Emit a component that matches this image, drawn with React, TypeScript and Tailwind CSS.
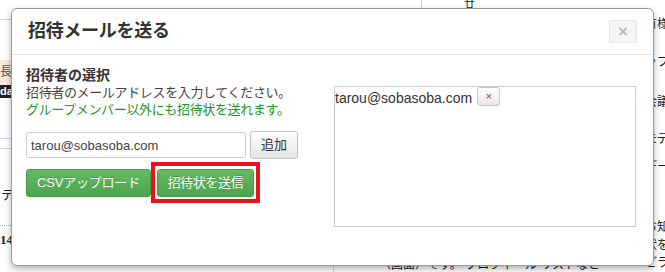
import React from 'react';

const FONT = '"Liberation Sans", "Noto Sans CJK JP", sans-serif';

// Page behind the dialog: only thin strips on the left and right are visible
const BackgroundPage: React.FC = () => (
  <div className="flex h-[272px] w-[665px] bg-white text-[#222]" style={{ fontFamily: FONT }}>
    <div className="w-[11px] shrink-0 overflow-hidden">
      <div className="mt-[19px] h-px bg-[#cfcff2]" />
      <div className="mt-[40px] h-[25px] bg-[#fbe9dc] text-[12px] leading-[25px] text-[#555]">長</div>
      <div className="h-[13px] bg-[#222] text-[11px] font-bold leading-[13px] text-white">da</div>
      <div className="mt-[40px] h-px bg-[#cfcff2]" />
      <div className="mt-[9px] h-px bg-[#cfcff2]" />
      <div className="mt-[38px] pl-[1px] text-[13px] leading-[16px]">テ</div>
      <div className="mt-[22px] border-t border-dotted border-[#aaa]" />
      <div className="mt-[6px] text-[13px] font-bold leading-[16px]" style={{ fontFamily: '"Liberation Serif", serif' }}>14</div>
    </div>
    <div className="relative flex-1">
      <div className="ml-[410px] flex h-[9px]">
        <div className="w-px bg-[#cfcff2]" />
        <div className="ml-[42px] text-[11px] leading-[8px]">廿</div>
      </div>
      <div className="mt-[249px] flex h-[14px]">
        <div className="ml-[322px] w-px bg-[#cfcff2]" />
        <div className="ml-[45px] whitespace-nowrap text-[12px] leading-[14px]">（画面）です。 プロフィール リストなど</div>
      </div>
    </div>
    <div className="w-[20px] shrink-0 overflow-hidden whitespace-nowrap text-[12px] leading-[14px]">
      <div className="mt-[17px]">有様</div>
      <div className="mt-[24px]">ップ</div>
      <div className="mt-[26px]">会議</div>
      <div className="mt-[23px]">モデ</div>
      <div className="mt-[14px]">デー</div>
      <div className="mt-[46px]">お知</div>
      <div className="mt-[4px]">状を</div>
      <div className="mt-[4px]">どラ</div>
    </div>
  </div>
);

const InviteModal: React.FC = () => (
  <div
    className="absolute left-[11px] top-[8px] h-[258px] w-[643px] rounded-[6px] border border-[#9a9a9a] bg-white shadow-[0_3px_7px_rgba(0,0,0,0.3)]"
    style={{ fontFamily: FONT }}
  >
    {/* Header */}
    <div className="flex h-[46px] items-center justify-between border-b border-[#e5e5e5] pl-[16px] pr-[16px]">
      <h3 className="text-[18px] font-bold tracking-[-0.3px] text-[#333]">招待メールを送る</h3>
      <button className="flex h-[23px] w-[28px] items-center justify-center rounded-[2px] border border-[#e6e6e6] bg-[#f5f5f5] text-[17px] font-bold leading-none text-[#bbb]">
        ×
      </button>
    </div>

    {/* Body */}
    <div className="flex pl-[14px] pt-[11px]">
      <div className="w-[272px]">
        <div className="text-[14px] font-bold leading-[18px] text-[#333]">招待者の選択</div>
        <div className="text-[13px] leading-[17px] tracking-[-0.35px] text-[#444]">招待者のメールアドレスを入力してください。</div>
        <div className="text-[13px] leading-[17px] tracking-[-0.35px] text-[#1f961f]">グループメンバー以外にも招待状を送れます。</div>

        <div className="mt-[13px] flex items-center">
          <input
            className="h-[26px] w-[220px] rounded-[3px] border border-[#ccc] px-[4px] text-[13px] text-[#444] outline-none"
            defaultValue="tarou@sobasoba.com"
          />
          <button className="ml-[4px] h-[28px] w-[48px] rounded-[3px] border border-[#c4c4c4] bg-gradient-to-b from-[#ffffff] to-[#e4e4e4] text-[13px] text-[#333]">
            追加
          </button>
        </div>

        <div className="mt-[10px] flex items-center">
          <button className="h-[28px] w-[125px] rounded-[3px] border border-[#449d44] bg-gradient-to-b from-[#64bb64] to-[#4ca44c] text-[13px] tracking-[-0.2px] text-white [text-shadow:0_-1px_0_rgba(0,0,0,0.2)]">
            CSVアップロード
          </button>
          <span className="relative ml-[6px] flex">
            <button className="h-[28px] w-[97px] rounded-[3px] border border-[#449d44] bg-gradient-to-b from-[#64bb64] to-[#4ca44c] text-[13px] tracking-[-0.4px] text-white [text-shadow:0_-1px_0_rgba(0,0,0,0.2)]">
              招待状を送信
            </button>
            {/* annotation frame */}
            <span className="pointer-events-none absolute -bottom-[6px] -left-[6px] -right-[6px] -top-[7px] border-4 border-[#e8141c]" />
          </span>
        </div>
      </div>

      <div className="ml-[36px] mt-[20px] h-[141px] w-[302px] border border-[#ccc]">
        <div className="flex items-start">
          <span className="pt-[1px] text-[14px] leading-[20px] text-[#333]">tarou@sobasoba.com</span>
          <button className="ml-[5px] flex h-[19px] w-[23px] items-center justify-center rounded-[3px] border border-[#c8c8c8] bg-gradient-to-b from-[#ffffff] to-[#e8e8e8] text-[11px] leading-none text-[#555]">
            ×
          </button>
        </div>
      </div>
    </div>
  </div>
);

export default function App() {
  return (
    <div className="relative h-[272px] w-[665px] overflow-hidden">
      <BackgroundPage />
      <InviteModal />
    </div>
  );
}
